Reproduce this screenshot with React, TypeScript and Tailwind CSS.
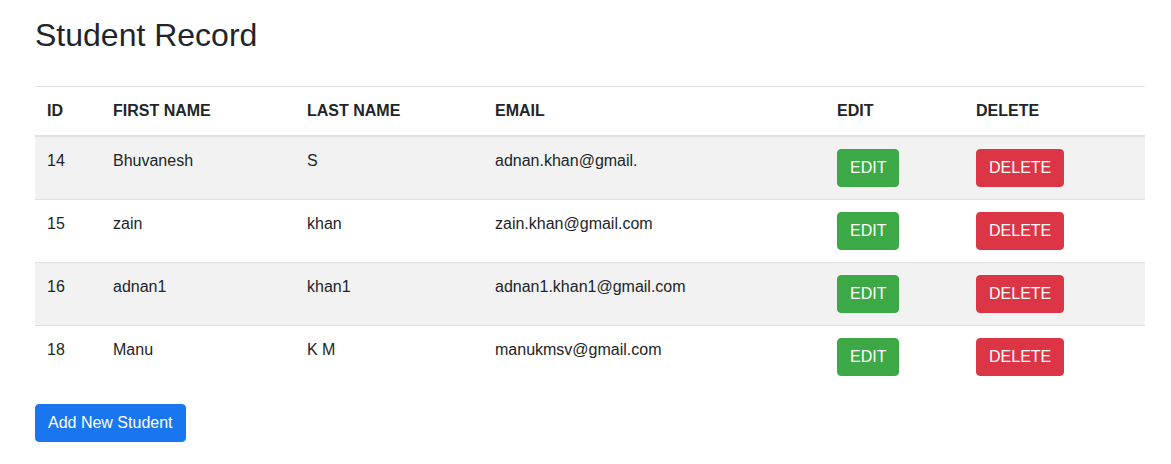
const students = [
  { id: 14, first: "Bhuvanesh", last: "S", email: "adnan.khan@gmail." },
  { id: 15, first: "zain", last: "khan", email: "zain.khan@gmail.com" },
  { id: 16, first: "adnan1", last: "khan1", email: "adnan1.khan1@gmail.com" },
  { id: 18, first: "Manu", last: "K M", email: "manukmsv@gmail.com" },
];

export default function App() {
  return (
    <div className="min-h-screen bg-white font-['Liberation_Sans',Arial,sans-serif] text-[16px] leading-6 text-[#212529]">
      <div className="px-[35px] pt-[16px]">
        <h2 className="mb-[32px] text-[32px] leading-[38px] font-normal">Student Record</h2>

        <table className="w-[1110px] border-collapse text-left">
          <colgroup>
            <col className="w-[66px]" />
            <col className="w-[194px]" />
            <col className="w-[188px]" />
            <col className="w-[342px]" />
            <col className="w-[139px]" />
            <col className="w-[181px]" />
          </colgroup>
          <thead>
            <tr className="border-t border-[#dee2e6]">
              {["ID", "FIRST NAME", "LAST NAME", "EMAIL", "EDIT", "DELETE"].map((h) => (
                <th
                  key={h}
                  className="border-b-2 border-[#dee2e6] px-3 py-3 align-bottom font-bold"
                >
                  {h}
                </th>
              ))}
            </tr>
          </thead>
          <tbody>
            {students.map((s, i) => (
              <tr
                key={s.id}
                className={i % 2 === 0 ? "bg-[#f2f2f2]" : "bg-white"}
              >
                <td className="border-t border-[#dee2e6] px-3 py-3 align-top">{s.id}</td>
                <td className="border-t border-[#dee2e6] px-3 py-3 align-top">{s.first}</td>
                <td className="border-t border-[#dee2e6] px-3 py-3 align-top">{s.last}</td>
                <td className="border-t border-[#dee2e6] px-3 py-3 align-top">{s.email}</td>
                <td className="border-t border-[#dee2e6] px-3 py-3 align-top">
                  <button className="rounded-[4px] border border-[#3ca946] bg-[#3ca946] px-3 py-[6px] leading-6 text-white">
                    EDIT
                  </button>
                </td>
                <td className="border-t border-[#dee2e6] px-3 py-3 align-top">
                  <button className="rounded-[4px] border border-[#dc3545] bg-[#dc3545] px-3 py-[6px] leading-6 text-white">
                    DELETE
                  </button>
                </td>
              </tr>
            ))}
          </tbody>
        </table>

        <button className="mt-4 rounded-[4px] border border-[#1a76ee] bg-[#1a76ee] px-3 py-[6px] leading-6 text-white">
          Add New Student
        </button>
      </div>
    </div>
  );
}
